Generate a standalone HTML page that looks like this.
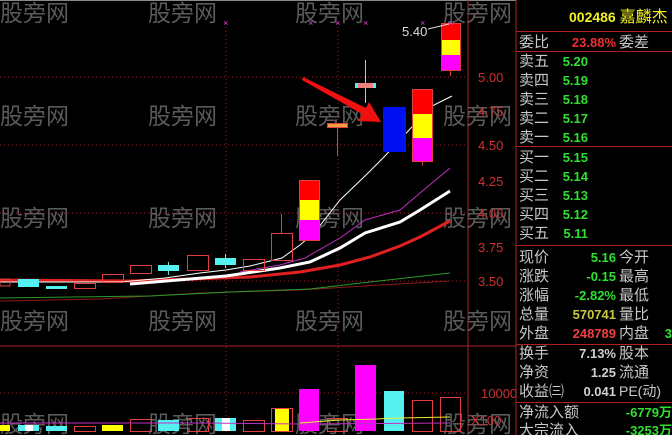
<!DOCTYPE html>
<html><head><meta charset="utf-8"><style>
html,body{margin:0;padding:0;background:#000;width:672px;height:435px;overflow:hidden}
svg{display:block}
text{font-family:"Liberation Sans","Noto Sans CJK SC",sans-serif}
.wm{fill:#5a5a5a;font-size:23px}
.lb{fill:#c8c8c8;font-size:15px}
.ax{fill:#d03030;font-size:13px}
.v{font-size:13px;font-weight:bold;text-anchor:end}
</style></head><body>
<svg width="672" height="435" viewBox="0 0 672 435">
<rect width="672" height="435" fill="#000"/>
<line x1="0" y1="0.5" x2="516" y2="0.5" stroke="#888"/>
<g stroke="#a02030" stroke-dasharray="1,3" stroke-width="1">
<line x1="0" y1="77" x2="467" y2="77"/><line x1="0" y1="145" x2="467" y2="145"/>
<line x1="0" y1="213" x2="467" y2="213"/><line x1="0" y1="281" x2="467" y2="281"/>
<line x1="0" y1="393" x2="467" y2="393"/>
<line x1="226" y1="23" x2="226" y2="432"/><line x1="338" y1="23" x2="338" y2="432"/>
</g>
<line x1="468" y1="0" x2="468" y2="435" stroke="#b02020"/>
<line x1="516" y1="0" x2="516" y2="435" stroke="#b02020"/>
<line x1="0" y1="346" x2="516" y2="346" stroke="#b02020"/>
<g class="wm">
<text x="0" y="21">股旁网</text><text x="148" y="21">股旁网</text><text x="295" y="21">股旁网</text><text x="443" y="21">股旁网</text>
<text x="0" y="124">股旁网</text><text x="148" y="124">股旁网</text><text x="295" y="124">股旁网</text><text x="443" y="124">股旁网</text>
<text x="0" y="226">股旁网</text><text x="148" y="226">股旁网</text><text x="295" y="226">股旁网</text><text x="443" y="226">股旁网</text>
<text x="0" y="329">股旁网</text><text x="148" y="329">股旁网</text><text x="295" y="329">股旁网</text><text x="443" y="329">股旁网</text>
<text x="0" y="432">股旁网</text><text x="148" y="432">股旁网</text><text x="295" y="432">股旁网</text><text x="443" y="432">股旁网</text>
</g>
<g class="ax">
<text x="478" y="82">5.00</text><text x="478" y="116">4.75</text><text x="478" y="150">4.50</text>
<text x="478" y="186">4.25</text><text x="478" y="218">4.00</text><text x="478" y="252">3.75</text><text x="478" y="286">3.50</text>
<text x="481" y="398">10000</text><text x="471" y="425">X100</text>
</g>
<polyline fill="none" stroke="#8b1a1a" stroke-width="1" points="0,301 100,299 200,293 300,290 380,285 450,281"/>
<polyline fill="none" stroke="#2a9a2a" stroke-width="1" points="0,298 150,296 230,292 310,289 370,282 450,273"/>
<polyline fill="none" stroke="#e02020" stroke-width="3" points="0,280 130,281 250,277 300,272 340,265 370,257 400,246 420,237 450,221"/>
<polyline fill="none" stroke="#fff" stroke-width="3" points="130,284 226,276 280,268 310,262 340,248 365,233 400,222 420,210 450,191"/>
<polyline fill="none" stroke="#c030c0" stroke-width="1" points="240,272 280,265 305,258 340,238 365,220 400,210 420,193 450,168"/>
<polyline fill="none" stroke="#fff" stroke-width="1" points="0,282 120,282 165,278 200,273 226,270 250,266 282,258 300,245 315,232 340,200 366,175 383,158 400,140 430,107 452,96"/>
<g stroke="#e04040" fill="none">
<rect x="0" y="279" width="10" height="7"/>
<rect x="74.5" y="283.5" width="21" height="5"/>
<rect x="102.5" y="274.5" width="21" height="8"/>
<rect x="130.5" y="265.5" width="21" height="8"/>
<rect x="187.5" y="255.5" width="21" height="15"/>
<rect x="243.5" y="259.5" width="21" height="11"/>
<line x1="281.5" y1="214" x2="281.5" y2="233"/>
<rect x="271.5" y="233.5" width="21" height="27"/>
<line x1="337.5" y1="127" x2="337.5" y2="156"/>
</g>
<rect x="18" y="279" width="21" height="8" fill="#55f0f0"/>
<rect x="46" y="286" width="21" height="3" fill="#55f0f0"/>
<line x1="168.5" y1="262" x2="168.5" y2="275" stroke="#55f0f0"/><rect x="158" y="265" width="21" height="6" fill="#55f0f0"/>
<line x1="225.5" y1="254" x2="225.5" y2="268" stroke="#55f0f0"/><rect x="215" y="258" width="21" height="7" fill="#55f0f0"/>
<rect x="299" y="180" width="20" height="20" fill="#f00"/><rect x="299" y="200" width="20" height="20" fill="#ff0"/><rect x="299" y="220" width="20" height="20" fill="#f0f"/>
<rect x="299.5" y="180.5" width="20" height="60" fill="none" stroke="#e04040"/>
<rect x="327.5" y="123.5" width="20" height="4" fill="#f0a040" stroke="#e04040"/>
<line x1="365.5" y1="60" x2="365.5" y2="103" stroke="#55f0f0"/>
<rect x="355" y="83" width="21" height="5" fill="#55f0f0"/><rect x="358" y="83" width="15" height="5" fill="#f08080"/>
<rect x="383" y="107" width="23" height="45" fill="#0010f0"/>
<line x1="422.5" y1="161" x2="422.5" y2="165" stroke="#e04040"/>
<rect x="412" y="89" width="20" height="25" fill="#f00"/><rect x="412" y="114" width="20" height="24" fill="#ff0"/><rect x="412" y="138" width="20" height="23" fill="#f0f"/>
<rect x="412.5" y="89.5" width="20" height="72" fill="none" stroke="#e04040"/>
<line x1="450.5" y1="70" x2="450.5" y2="76" stroke="#e04040"/>
<rect x="441" y="23" width="19" height="17" fill="#f00"/><rect x="441" y="40" width="19" height="15" fill="#ff0"/><rect x="441" y="55" width="19" height="15" fill="#f0f"/>
<rect x="441.5" y="23.5" width="19" height="47" fill="none" stroke="#e04040"/>
<text x="402" y="36" fill="#ddd" font-size="13">5.40</text>
<line x1="428" y1="29" x2="449" y2="24" stroke="#ddd"/>
<g fill="#e040e0" font-size="9"><text x="223" y="26">×</text><text x="308" y="26">×</text><text x="335" y="26">×</text><text x="363" y="26">×</text><text x="420" y="26">×</text><text x="448" y="26">×</text></g>
<polygon points="303,77 366,108 369,102 381,122 358,121 362,114 302,80" fill="#f01010"/>
<g>
<rect x="0" y="425" width="10" height="6" fill="#ff0"/>
<rect x="18" y="425" width="21" height="6" fill="#55f0f0"/><rect x="25" y="425" width="8" height="6" fill="#fff"/>
<rect x="46" y="426" width="21" height="5" fill="#55f0f0"/>
<rect x="74.5" y="426.5" width="21" height="5" fill="none" stroke="#e04040"/>
<rect x="102" y="425" width="21" height="6" fill="#ff0"/>
<rect x="130.5" y="419.5" width="21" height="12" fill="none" stroke="#e04040"/>
<rect x="158" y="420" width="21" height="11" fill="#55f0f0"/>
<rect x="187.5" y="418.5" width="21" height="13" fill="none" stroke="#e04040"/>
<rect x="215" y="418" width="21" height="13" fill="#55f0f0"/><rect x="222" y="418" width="8" height="13" fill="#fff"/>
<rect x="243.5" y="420.5" width="21" height="11" fill="none" stroke="#e04040"/>
<rect x="271.5" y="408.5" width="21" height="23" fill="none" stroke="#e04040"/><rect x="275" y="409" width="14" height="22" fill="#ff0"/>
<rect x="299" y="389" width="20" height="42" fill="#f0f"/>
<rect x="327.5" y="418.5" width="20" height="13" fill="none" stroke="#e04040"/>
<rect x="355" y="365" width="21" height="66" fill="#f0f"/>
<rect x="384" y="391" width="20" height="40" fill="#55f0f0"/>
<rect x="412.5" y="400.5" width="20" height="31" fill="none" stroke="#e04040"/>
<rect x="440.5" y="397.5" width="20" height="34" fill="none" stroke="#e04040"/>
<polyline fill="none" stroke="#ee3" points="300,423 340,420 376,419 400,418 450,417"/>
<polyline fill="none" stroke="#c030c0" points="0,423 200,423 300,424 450,423"/>
</g>
<g stroke="#b02020">
<line x1="516" y1="31.5" x2="672" y2="31.5"/><line x1="516" y1="51.5" x2="672" y2="51.5"/>
<line x1="516" y1="146.5" x2="672" y2="146.5"/><line x1="516" y1="245.5" x2="672" y2="245.5"/>
<line x1="516" y1="344.5" x2="672" y2="344.5"/><line x1="516" y1="402.5" x2="672" y2="402.5"/>
</g>
<text x="569" y="22" fill="#f0f020" font-size="14" font-weight="bold">002486 <tspan font-weight="normal" font-size="16">嘉麟杰</tspan></text>
<g class="lb">
<text x="519" y="47">委比</text><text x="619" y="47">委差</text>
<text x="519" y="66">卖五</text><text x="519" y="85">卖四</text><text x="519" y="104">卖三</text><text x="519" y="123">卖二</text><text x="519" y="142">卖一</text>
<text x="519" y="162">买一</text><text x="519" y="181">买二</text><text x="519" y="200">买三</text><text x="519" y="219">买四</text><text x="519" y="238">买五</text>
<text x="519" y="262">现价</text><text x="619" y="262">今开</text>
<text x="519" y="281">涨跌</text><text x="619" y="281">最高</text>
<text x="519" y="300">涨幅</text><text x="619" y="300">最低</text>
<text x="519" y="319">总量</text><text x="619" y="319">量比</text>
<text x="519" y="338">外盘</text><text x="619" y="338">内盘</text>
<text x="519" y="358">换手</text><text x="619" y="358">股本</text>
<text x="519" y="377">净资</text><text x="619" y="377">流通</text>
<text x="519" y="396">收益㈢</text><text x="619" y="396" font-size="14">PE(动)</text>
<text x="519" y="417">净流入额</text><text x="519" y="435">大宗流入</text>
</g>
<text class="v" x="616" y="47" fill="#f03030">23.88%</text>
<g class="v" fill="#30e030">
<text x="588" y="66">5.20</text><text x="588" y="85">5.19</text><text x="588" y="104">5.18</text><text x="588" y="123">5.17</text><text x="588" y="142">5.16</text>
<text x="588" y="162">5.15</text><text x="588" y="181">5.14</text><text x="588" y="200">5.13</text><text x="588" y="219">5.12</text><text x="588" y="238">5.11</text>
<text x="616" y="262">5.16</text><text x="616" y="281">-0.15</text><text x="616" y="300">-2.82%</text>
<text x="672" y="338">3</text>
<text x="672" y="417">-6779万</text><text x="672" y="435">-3253万</text>
</g>
<text class="v" x="616" y="319" fill="#c8c840">570741</text>
<text class="v" x="616" y="338" fill="#f04040">248789</text>
<g class="v" fill="#d0d0d0"><text x="616" y="358">7.13%</text><text x="616" y="377">1.25</text><text x="616" y="396">0.041</text></g>
</svg>
</body></html>
